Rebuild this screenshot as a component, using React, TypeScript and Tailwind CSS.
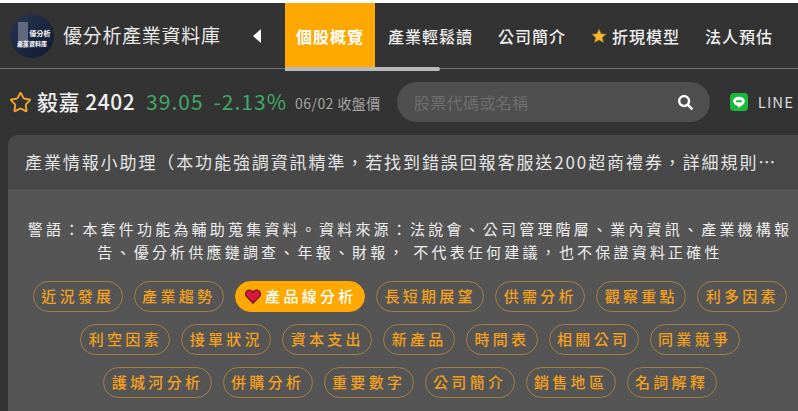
import { Star } from "lucide-react";
import { FaSearch } from "react-icons/fa";

const pillRows = [
  ["近況發展", "產業趨勢", "產品線分析", "長短期展望", "供需分析", "觀察重點", "利多因素"],
  ["利空因素", "接單狀況", "資本支出", "新產品", "時間表", "相關公司", "同業競爭"],
  ["護城河分析", "併購分析", "重要數字", "公司簡介", "銷售地區", "名詞解釋"],
];

const tabs = ["產業輕鬆讀", "公司簡介", "折現模型", "法人預估"];

function Logo() {
  return (
    <div className="relative w-[44px] h-[44px] rounded-full overflow-hidden bg-gradient-to-br from-[#2b3550] to-[#0e1a33] shrink-0">
      <div className="absolute left-[8px] top-[8px] w-[10px] h-[26px] bg-[#7c8494] opacity-70" />
      <div className="absolute left-[16px] top-[15px] w-[28px] text-center text-[7px] leading-[9px] font-bold text-white">優分析</div>
      <div className="absolute left-0 top-[25px] w-[44px] text-center text-[6px] leading-[9px] font-bold text-white">產業資料庫</div>
    </div>
  );
}

function Heart() {
  return (
    <svg width="16" height="15" viewBox="0 0 16 15" className="ml-[2px] mr-[4px] shrink-0">
      <path d="M8 14.2 1.5 7.6C-.4 5.5.6 1.4 3.8 1c1.900-.2 3.400.8 4.200 2.200C8.800 1.800 10.300.8 12.200 1c3.200.4 4.200 4.500 2.300 6.600Z" fill="#d9163c" stroke="#5a1020" strokeWidth="1.100" />
    </svg>
  );
}

function GoldStar() {
  return (
    <svg width="16" height="16" viewBox="0 0 24 24" className="mr-[5px] shrink-0">
      <path d="m12 1.500 3.200 7 7.600.8-5.700 5.100 1.600 7.500L12 18l-6.700 3.900 1.600-7.500L1.200 9.300l7.600-.8Z" fill="#fbb62f" stroke="#8a6a20" strokeWidth="1" />
    </svg>
  );
}

function LineIcon() {
  return (
    <div className="w-[18px] h-[18px] rounded-[4px] bg-[#19b93b] flex items-center justify-center">
      <svg width="14" height="14" viewBox="0 0 24 24">
        <path d="M12 3C6.500 3 2 6.500 2 10.900c0 3.900 3.500 7.200 8.300 7.800.9.200.6 1.100.5 2.300 0 .5.400.6.900.3 1.700-1 6.200-3.700 8.200-6 1.400-1.500 2.100-3 2.100-4.400C22 6.500 17.500 3 12 3Z" fill="#fff" />
        <rect x="7" y="9" width="10" height="3.500" rx="1" fill="#19b93b" />
      </svg>
    </div>
  );
}

export default function App() {
  return (
    <div className="w-[798px] h-[411px] overflow-hidden bg-[#333333] font-['Noto_Sans_CJK_TC','Noto_Sans',sans-serif]">
      <div className="h-[3px] bg-white" />

      <header className="relative h-[66px] flex border-b border-[#6f6f6f]">
        <div className="w-[285px] pl-[10px] flex items-center shrink-0">
          <Logo />
          <span className="ml-[9px] text-[19px] text-[#e8e8e8] tracking-[0.7px]">優分析產業資料庫</span>
          <span className="ml-[32px] w-0 h-0 border-y-[7px] border-y-transparent border-r-[8px] border-r-white" />
        </div>
        <div className="w-[90px] h-[65px] bg-[#ffa800] flex items-center justify-center text-[16px] font-bold tracking-[1px] text-white shrink-0">
          個股概覽
        </div>
        <nav className="flex items-center pl-[13px] gap-[25px] text-[16px] font-medium tracking-[1px] text-[#eeeeee] whitespace-nowrap">
          {tabs.map((t) => (
            <span key={t} className="flex items-center">
              {t === "折現模型" && <GoldStar />}
              {t}
            </span>
          ))}
        </nav>
        <div className="absolute left-[285px] top-[64px] w-[155px] h-[4px] rounded-r-full bg-[#b9b9b9]" />
      </header>

      <div className="h-[66px] pl-[9px] flex items-center">
        <Star size={23} strokeWidth={2} className="text-[#f0a52a] shrink-0" />
        <span className="ml-[5px] text-[21px] text-[#eeeeee] font-medium tracking-[0.5px]">毅嘉 2402</span>
        <span className="ml-[11px] text-[21px] text-[#3fa866] tracking-[1px]">39.05</span>
        <span className="ml-[10px] text-[21px] text-[#3fa866] tracking-[1px]">-2.13%</span>
        <span className="ml-[8px] text-[14px] text-[#a5a5a5] tracking-[0.45px] pt-[3px]">06/02 收盤價</span>
        <div className="ml-[16px] w-[313px] h-[40px] rounded-full bg-[#4f4f4f] flex items-center justify-between pl-[17px] pr-[17px] shrink-0">
          <span className="text-[16px] text-[#6e6e6e] tracking-[0.4px]">股票代碼或名稱</span>
          <FaSearch size={15} className="text-white" />
        </div>
        <div className="ml-[20px] shrink-0">
          <LineIcon />
        </div>
        <span className="ml-[10px] text-[15px] text-[#d8d8d8] tracking-[1px]">LINE</span>
      </div>

      <section className="ml-[8px] w-[804px] h-[276px] rounded-t-[10px] overflow-hidden bg-[#555555]">
        <div className="h-[54px] bg-[#484848] border-b border-[#424242] pl-[17px] pr-[29px] flex items-center">
          <p className="text-[17px] text-[#e4e4e4] tracking-[1.9px] truncate">
            產業情報小助理（本功能強調資訊精準，若找到錯誤回報客服送200超商禮券，詳細規則請參考活動說明頁面內容
          </p>
        </div>
        <div className="pt-[28px] flex flex-col items-center">
          <p className="w-[780px] text-center text-[15px] leading-[23px] tracking-[3.200px] text-[#eeeeee]">
            警語：本套件功能為輔助蒐集資料。資料來源：法說會、公司管理階層、業內資訊、產業機構報告、優分析供應鏈調查、年報、財報， 不代表任何建議，也不保證資料正確性
          </p>
          <div className="mt-[18px] flex flex-col gap-[12px] items-center">
            {pillRows.map((row, i) => (
              <div key={i} className="flex gap-[11px]">
                {row.map((p) =>
                  p === "產品線分析" ? (
                    <span key={p} className="h-[31px] px-[7.400px] rounded-full bg-[#ffa800] border border-[#ffa800] flex items-center text-[15px] font-medium tracking-[3.300px] text-white whitespace-nowrap">
                      <Heart />
                      {p}
                    </span>
                  ) : (
                    <span key={p} className="h-[31px] px-[7.400px] rounded-full border border-[#a67f3f] flex items-center text-[15px] font-medium tracking-[3.300px] text-[#f2a01e] whitespace-nowrap">
                      {p}
                    </span>
                  )
                )}
              </div>
            ))}
          </div>
        </div>
      </section>
    </div>
  );
}
